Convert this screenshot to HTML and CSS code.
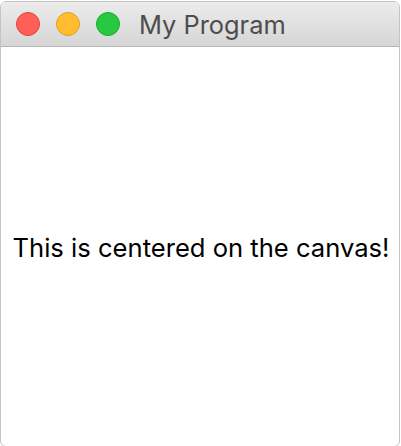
FILE: index.html
```html
<!DOCTYPE html>
<html>
<head>
<meta charset="utf-8">
<link rel="stylesheet" href="styles.css">
</head>
<body>
<div class="window">
  <div class="titlebar">
    <div class="lights">
      <span class="light red"></span>
      <span class="light yellow"></span>
      <span class="light green"></span>
    </div>
    <div class="title">My Program</div>
  </div>
  <div class="canvas">
    <div class="message">This is centered on the canvas!</div>
  </div>
</div>
</body>
</html>
```
FILE: styles.css
```css
html, body {
  margin: 0;
  padding: 0;
  background: #ffffff;
}
body {
  width: 401px;
  height: 446px;
  overflow: hidden;
  padding-top: 1px;
  box-sizing: border-box;
}
.window {
  width: 400px;
  height: 446px;
  box-sizing: border-box;
  border: 1px solid #c4c4c4;
  border-radius: 6px;
  overflow: hidden;
  display: flex;
  flex-direction: column;
  background: #ffffff;
}
.titlebar {
  height: 44px;
  flex: none;
  display: flex;
  align-items: center;
  background: linear-gradient(#ececec, #d6d6d6);
  border-bottom: 1px solid #b8b8b8;
  box-sizing: content-box;
}
.lights {
  display: flex;
  gap: 16px;
  padding-left: 15px;
}
.light {
  width: 22px;
  height: 22px;
  border-radius: 50%;
  display: block;
}
.red { background: #fe5f57; border: 1px solid #e0443e; }
.yellow { background: #febc2e; border: 1px solid #dea123; }
.green { background: #28c840; border: 1px solid #1aab29; }
.title {
  margin-left: 19px;
  font-family: Inter, "Liberation Sans", sans-serif;
  font-size: 25.4px;
  color: #4d4d4d;
  line-height: 1;
  margin-top: 1px;
}
.canvas {
  flex: 1;
  display: flex;
  align-items: center;
  justify-content: center;
}
.message {
  font-family: Inter, "Liberation Sans", sans-serif;
  font-size: 25.6px;
  color: #000000;
  margin-top: 2px;
  margin-left: 2px;
}
```
